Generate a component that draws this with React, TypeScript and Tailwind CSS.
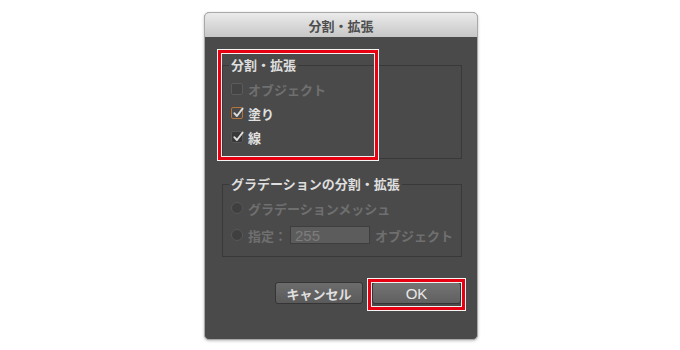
import React from "react";

const jp = { fontFamily: '"Noto Sans CJK JP", "Noto Sans", sans-serif' };
const latin = { fontFamily: '"Liberation Sans", Arial, sans-serif' };

function Check({ color = "#dcdcdc" }: { color?: string }) {
  return (
    <svg width="12" height="12" viewBox="0 0 12 12" className="absolute left-[0px] top-[-1px]">
      <path d="M2.3 6.2 L4.9 9 L10.6 1.6" fill="none" stroke={color} strokeWidth="1.9" strokeLinecap="round" strokeLinejoin="round" />
    </svg>
  );
}

function Annotation({ className }: { className: string }) {
  return (
    <div className={`absolute border border-[#f4f4f4] ${className}`}>
      <div className="w-full h-full border-[3px] border-[#e60012]">
        <div className="w-full h-full border border-[#f0f0f0]" />
      </div>
    </div>
  );
}

export default function App() {
  return (
    <div className="w-[680px] h-[350px] bg-white pt-[12px] pl-[204px]" style={jp}>
      <div className="relative w-[274px] h-[328px] flex flex-col rounded-[5px] overflow-hidden bg-[#4a4a4a] border border-[#a9a9a9] shadow-[0_1px_3px_rgba(0,0,0,0.25)]">
        <div className="h-[24px] shrink-0 flex items-center justify-center bg-gradient-to-b from-[#ebebeb] to-[#c7c7c7] text-[13px] font-bold text-[#4e4e4e] leading-none">
          分割・拡張
        </div>

        <div className="flex flex-col">
          <fieldset className="ml-[17px] mt-[19px] w-[240px] border border-[#393939] pt-[3px] pb-[9px]">
            <legend className="ml-[6px] px-[2px] text-[13px] leading-[18px] font-bold text-[#dedede]">分割・拡張</legend>
            <div className="flex items-center h-[24px] pl-[8px]">
              <div className="relative w-[12px] h-[12px] rounded-[2px] border border-[#5b5b5b] bg-[#444444]" />
              <span className="ml-[5px] text-[13px] font-bold text-[#6f6f6f] leading-none">オブジェクト</span>
            </div>
            <div className="flex items-center h-[24px] pl-[8px]">
              <div className="relative w-[12px] h-[12px] rounded-[2px] border-[1.5px] border-[#b8753a] bg-[#4a4a4a]">
                <Check />
              </div>
              <span className="ml-[5px] text-[13px] font-bold text-[#e0e0e0] leading-none">塗り</span>
            </div>
            <div className="flex items-center h-[24px] pl-[8px]">
              <div className="relative w-[12px] h-[12px] rounded-[2px] border border-[#555555] bg-[#393939]">
                <Check />
              </div>
              <span className="ml-[5px] text-[13px] font-bold text-[#e0e0e0] leading-none">線</span>
            </div>
          </fieldset>

          <fieldset className="ml-[17px] mt-[16px] w-[240px] border border-[#393939] pt-[3px] pb-[9px]">
            <legend className="ml-[6px] px-[2px] text-[13px] leading-[18px] font-bold text-[#dedede]">グラデーションの分割・拡張</legend>
            <div className="flex items-center h-[24px] pl-[8px]">
              <div className="w-[12px] h-[12px] rounded-full border border-[#575757] bg-[#3f3f3f]" />
              <span className="ml-[5px] text-[13px] font-bold text-[#6f6f6f] leading-none">グラデーションメッシュ</span>
            </div>
            <div className="flex items-center h-[24px] pl-[8px] mt-[3px]">
              <div className="w-[12px] h-[12px] rounded-full border border-[#575757] bg-[#3f3f3f]" />
              <span className="ml-[5px] text-[13px] font-bold text-[#6f6f6f] leading-none">指定：</span>
              <div className="ml-[3px] w-[80px] h-[18px] flex items-center pl-[4px] bg-[#5c5c5c] border border-[#3e3e3e] text-[15px] leading-none text-[#7c7c7c]" style={latin}>
                255
              </div>
              <span className="ml-[5px] text-[13px] font-bold text-[#6f6f6f] leading-none">オブジェクト</span>
            </div>
          </fieldset>

          <div className="mt-[25px] flex justify-end gap-[9px] pr-[16px]">
            <div className="w-[88px] h-[22px] flex items-center justify-center rounded-[3px] border border-[#353535] bg-gradient-to-b from-[#6c6c6c] to-[#5a5a5a] text-[13px] font-bold text-[#e0e0e0] leading-none">
              キャンセル
            </div>
            <div className="w-[89px] h-[22px] flex items-center justify-center rounded-[3px] border border-[#353535] bg-gradient-to-b from-[#747474] to-[#606060] text-[15px] text-[#e8e8e8] leading-none" style={latin}>
              OK
            </div>
          </div>
        </div>

        <Annotation className="left-[12px] top-[36px] w-[162px] h-[112px]" />
        <Annotation className="left-[162px] top-[265px] w-[99px] h-[33px]" />
      </div>
    </div>
  );
}
